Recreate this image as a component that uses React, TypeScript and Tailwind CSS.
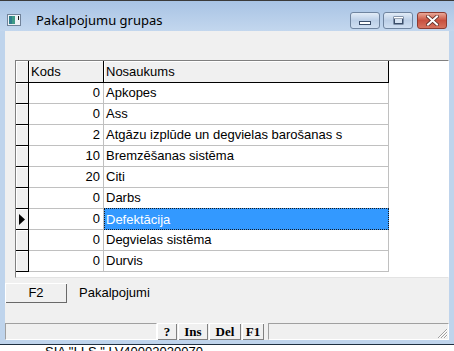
import React from "react";

const rows: [string, string][] = [
  ["0", "Apkopes"],
  ["0", "Ass"],
  ["2", "Atgāzu izplūde un degvielas barošanas s"],
  ["10", "Bremzēšanas sistēma"],
  ["20", "Citi"],
  ["0", "Darbs"],
  ["0", "Defektācija"],
  ["0", "Degvielas sistēma"],
  ["0", "Durvis"],
];

function AppIcon() {
  return (
    <svg width="14" height="12" viewBox="0 0 14 12">
      <rect x="0.5" y="0.5" width="13" height="11" fill="#eef2f6" stroke="#71839a" />
      <rect x="2" y="2" width="6" height="8" fill="#3f9a86" />
      <rect x="2" y="2" width="3" height="8" fill="#2f7d8c" />
      <rect x="11" y="2" width="1" height="4" fill="#1a1a1a" />
    </svg>
  );
}

function CapBtn({ kind }: { kind: "min" | "max" | "close" }) {
  const isClose = kind === "close";
  return (
    <div
      className={
        "w-[30px] h-[17px] rounded-[3px] border flex items-center justify-center " +
        (isClose
          ? "border-[#8c3b31] bg-gradient-to-b from-[#e9a898] via-[#c8503f] to-[#d7735f]"
          : "border-[#6f849f] bg-gradient-to-b from-[#e2ecf7] via-[#bccfe7] to-[#cfdff2]")
      }
    >
      {kind === "min" && (
        <svg width="14" height="6" viewBox="0 0 14 6" className="mt-[5px]">
          <rect x="1.5" y="1.5" width="11" height="3" fill="#fff" stroke="#3a4d69" />
        </svg>
      )}
      {kind === "max" && (
        <svg width="11" height="9" viewBox="0 0 11 9">
          <rect x="0.5" y="0.5" width="10" height="8" fill="#3a4d69" />
          <rect x="2" y="3" width="7" height="4" fill="#d6e3f3" />
          <rect x="1" y="1" width="9" height="1.5" fill="#fff" />
        </svg>
      )}
      {kind === "close" && (
        <svg width="13" height="11" viewBox="0 0 13 11">
          <path d="M2 1.5 L11 9.5 M11 1.5 L2 9.5" stroke="#5a2a24" strokeWidth="3.6" strokeLinecap="square" />
          <path d="M2 1.5 L11 9.5 M11 1.5 L2 9.5" stroke="#ffffff" strokeWidth="2" strokeLinecap="square" />
        </svg>
      )}
    </div>
  );
}

const cell3d = "bg-[#f0f0f0] border-r border-b border-black shadow-[inset_1px_1px_0_#ffffff]";

function StatusBtn({ label, w }: { label: string; w: string }) {
  return (
    <div
      className={
        w +
        " h-full shrink-0 flex items-center justify-center bg-[#f0f0f0] shadow-[inset_1px_1px_0_#ffffff,inset_-1px_-1px_0_#808080] font-['Liberation_Serif',serif] font-bold text-[13px] leading-none"
      }
    >
      {label}
    </div>
  );
}

export default function App() {
  return (
    <div className="w-[454px] h-[351px] overflow-hidden bg-white flex flex-col font-['Liberation_Sans',Arial,sans-serif] text-[13px] text-black">
      <div className="h-px shrink-0 bg-[#3a3a3a]" />
      <div className="shrink-0 flex flex-col bg-[#bfd4ec]">
        {/* title bar */}
        <div className="h-[30px] flex items-center pt-[8px] pl-[7px] pr-[7px] bg-gradient-to-b from-[#a8c3e4] to-[#c3d7ee]">
          <AppIcon />
          <span className="ml-[15px] font-['Noto_Sans',sans-serif] text-[13px] leading-none mt-[1px]">
            Pakalpojumu grupas
          </span>
          <div className="ml-auto flex">
            <CapBtn kind="min" />
            <div className="w-[3px]" />
            <CapBtn kind="max" />
            <div className="w-[4px]" />
            <CapBtn kind="close" />
          </div>
        </div>
        {/* client */}
        <div className="flex px-[5px]">
          <div className="flex-1 h-[309px] bg-[#f0f0f0] flex flex-col">
            {/* grid */}
            <div className="mt-[29px] ml-[10px] h-[218px] border border-t-[#808080] border-l-[#808080] border-r-white border-b-[#e3e3e3] bg-white flex flex-col overflow-hidden">
              <div className="flex h-[22px] shrink-0 leading-[21px]">
                <div className={"w-[13px] shrink-0 " + cell3d} />
                <div className={"w-[75px] shrink-0 pl-[2px] " + cell3d}>Kods</div>
                <div className={"w-[285px] shrink-0 pl-[2px] " + cell3d}>Nosaukums</div>
              </div>
              {rows.map(([k, n], i) => {
                const sel = i === 6;
                return (
                  <div key={i} className="flex h-[21px] shrink-0 leading-[20px]">
                    <div className={"w-[13px] shrink-0 flex items-center justify-center " + cell3d}>
                      {sel && (
                        <svg width="6" height="11" viewBox="0 0 6 11">
                          <path d="M0 0 L6 5.5 L0 11 Z" fill="#000" />
                        </svg>
                      )}
                    </div>
                    <div className="w-[75px] shrink-0 border-r border-b border-[#c0c0c0] text-right pr-[3px]">{k}</div>
                    {sel ? (
                      <div className="w-[285px] shrink-0 h-[21px] -mt-px">
                        <div className="h-[22px] border border-dotted border-[#1a1a1a] bg-[#3399ff] text-white pl-[1px] leading-[21px] whitespace-nowrap">
                          {n}
                        </div>
                      </div>
                    ) : (
                      <div className="w-[285px] shrink-0 border-r border-b border-[#c0c0c0] pl-[2px] whitespace-nowrap overflow-hidden">
                        {n}
                      </div>
                    )}
                  </div>
                );
              })}
            </div>
            {/* F2 row */}
            <div className="mt-[5px] flex items-center h-[20px]">
              <div className="w-[62px] h-[20px] flex items-center justify-center bg-[#f0f0f0] shadow-[inset_1px_1px_0_#ffffff,inset_-1px_-1px_0_#696969]">
                F2
              </div>
              <span className="ml-[12px]">Pakalpojumi</span>
            </div>
            {/* status bar */}
            <div className="mt-[20px] h-[17px] flex">
              <div className="w-[152px] shrink-0 h-full border border-t-[#a0a0a0] border-l-[#a0a0a0] border-r-white border-b-white" />
              <StatusBtn label="?" w="w-[20px]" />
              <div className="w-[1px]" />
              <StatusBtn label="Ins" w="w-[30px]" />
              <div className="w-[1px]" />
              <StatusBtn label="Del" w="w-[32px]" />
              <div className="w-[1px]" />
              <StatusBtn label="F1" w="w-[22px]" />
              <div className="w-[4px]" />
              <div className="flex-1 h-full border border-t-[#a0a0a0] border-l-[#a0a0a0] border-r-white border-b-white flex items-end justify-end">
                <svg width="12" height="12" viewBox="0 0 12 12">
                  <path d="M11 2 L2 11 M11 5 L5 11 M11 8 L8 11" stroke="#a0a0a0" strokeWidth="1" />
                  <path d="M12 2 L3 11 M12 5 L6 11 M12 8 L9 11" stroke="#ffffff" strokeWidth="1" />
                </svg>
              </div>
            </div>
          </div>
        </div>
        <div className="h-[4px]" />
      </div>
      <div className="h-px shrink-0 bg-[#1f2f40]" />
      <div className="h-[6px] shrink-0 overflow-hidden">
        <div className="ml-[45px] -mt-[1px] leading-[15px] whitespace-nowrap">SIA "I.I.S." LV40002020070</div>
      </div>
    </div>
  );
}
